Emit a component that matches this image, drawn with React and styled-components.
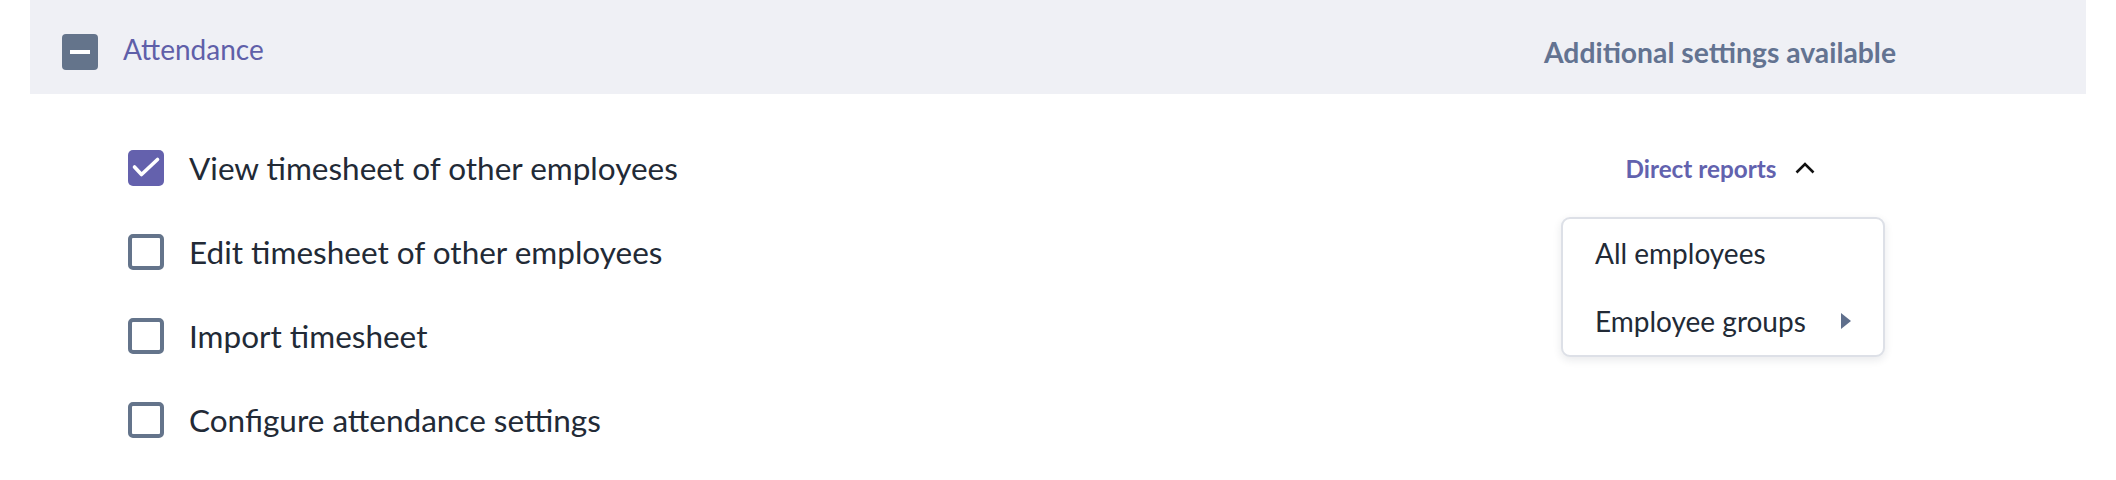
import React from "react";
import styled, { createGlobalStyle } from "styled-components";

const Global = createGlobalStyle`
  html, body { margin: 0; padding: 0; background: #ffffff; }
  body { font-family: Lato, "Noto Sans", sans-serif; -webkit-font-smoothing: antialiased; }
  * { box-sizing: border-box; }
`;

const Page = styled.div`
  padding: 0 30px;
  width: 2116px;
`;

const SectionHeader = styled.div`
  height: 94px;
  padding: 10px 186px 0 32px;
  background: #eff0f5;
  display: flex;
  align-items: center;
`;

const MinusBox = styled.span`
  width: 36px;
  height: 36px;
  border-radius: 4px;
  background: #64748b;
  display: flex;
  align-items: center;
  justify-content: center;
  flex-shrink: 0;
  &::after {
    content: "";
    width: 20px;
    height: 4px;
    background: #ffffff;
  }
`;

const SectionTitle = styled.span`
  margin-left: 25px;
  padding-bottom: 6px;
  font-size: 28px;
  font-weight: 400;
  color: #5f5fa9;
  flex: 1;
`;

const RightColumn = styled.div`
  width: 360px;
  display: flex;
  justify-content: center;
  position: relative;
`;

const Hint = styled.span`
  font-size: 28.3px;
  font-weight: 700;
  color: #637391;
`;

const List = styled.div`
  margin-top: 32px;
  display: flex;
  flex-direction: column;
`;

const Row = styled.div`
  height: 84px;
  padding: 0 186px 0 98px;
  display: flex;
  align-items: center;
`;

const Box = styled.span`
  width: 36px;
  height: 36px;
  border-radius: 5px;
  flex-shrink: 0;
  display: flex;
  background: ${(p) => (p.$checked ? "#6461ad" : "#ffffff")};
  border: ${(p) => (p.$checked ? "none" : "4px solid #64748b")};
`;

const Label = styled.span`
  margin-left: 25px;
  font-size: 31.5px;
  color: #222a36;
  flex: 1;
`;

const Trigger = styled.button`
  border: none;
  background: none;
  padding: 0;
  display: flex;
  align-items: center;
  gap: 18px;
  font-family: inherit;
  font-size: 24.3px;
  font-weight: 700;
  color: #6262ae;
  cursor: pointer;
`;

const Menu = styled.div`
  position: absolute;
  top: 63px;
  left: 21px;
  width: 324px;
  height: 140px;
  background: #ffffff;
  border: 2px solid #dde0e7;
  border-radius: 9px;
  box-shadow: 0 3px 8px rgba(30, 40, 60, 0.1);
  z-index: 2;
  display: flex;
  flex-direction: column;
`;

const MenuItem = styled.div`
  height: 68px;
  padding: 0 32px 0 32px;
  display: flex;
  align-items: center;
  justify-content: space-between;
  font-size: 28px;
  color: #222a36;
`;

const Check = () => (
  <svg width="36" height="36" viewBox="0 0 36 36">
    <polyline points="6.5,17 13.5,24.5 29.5,9.5" fill="none" stroke="#fff" strokeWidth="3.6" strokeLinecap="round" strokeLinejoin="round" />
  </svg>
);

const ChevronUp = () => (
  <svg width="20" height="12" viewBox="0 0 20 12">
    <polyline points="1.5,10.5 10,2 18.5,10.5" fill="none" stroke="#111" strokeWidth="2.6" />
  </svg>
);

const Caret = () => (
  <svg width="10" height="16" viewBox="0 0 10 16">
    <polygon points="0,0 10,8 0,16" fill="#5f6f8c" />
  </svg>
);

const rows = [
  { label: "View timesheet of other employees", checked: true, scope: true },
  { label: "Edit timesheet of other employees" },
  { label: "Import timesheet" },
  { label: "Configure attendance settings" },
];

export default function App() {
  return (
    <Page>
      <Global />
      <SectionHeader>
        <MinusBox />
        <SectionTitle>Attendance</SectionTitle>
        <RightColumn>
          <Hint>Additional settings available</Hint>
        </RightColumn>
      </SectionHeader>
      <List>
        {rows.map((r) => (
          <Row key={r.label}>
            <Box $checked={r.checked}>{r.checked && <Check />}</Box>
            <Label>{r.label}</Label>
            {r.scope && (
              <RightColumn>
                <Trigger>
                  Direct reports
                  <ChevronUp />
                </Trigger>
                <Menu>
                  <MenuItem>All employees</MenuItem>
                  <MenuItem>
                    Employee groups
                    <Caret />
                  </MenuItem>
                </Menu>
              </RightColumn>
            )}
          </Row>
        ))}
      </List>
    </Page>
  );
}
